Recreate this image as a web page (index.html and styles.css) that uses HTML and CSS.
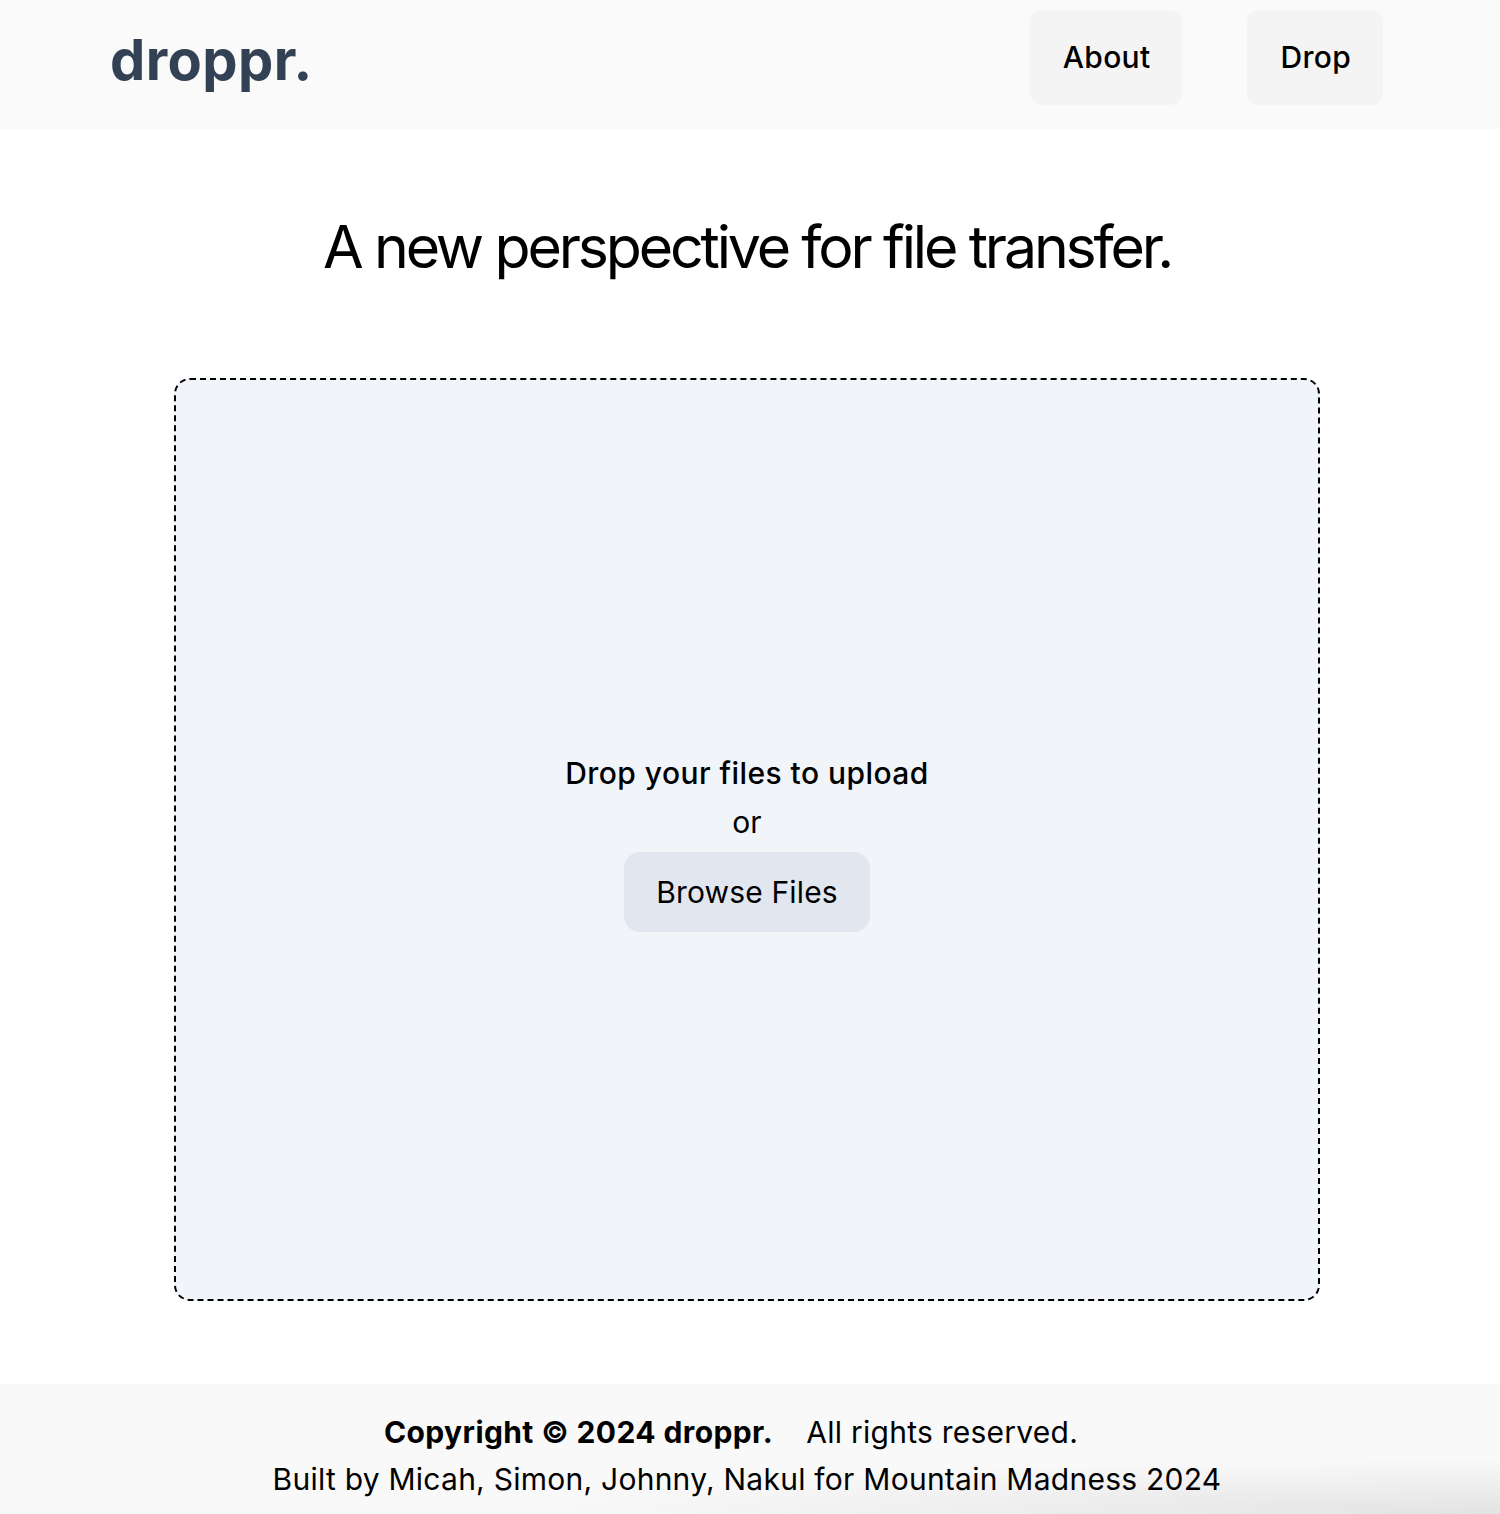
FILE: index.html
```html
<!DOCTYPE html>
<html lang="en">
<head>
<meta charset="utf-8">
<title>droppr.</title>
<link rel="stylesheet" href="styles.css">
</head>
<body>
<header class="site-header">
  <a class="logo" href="#">droppr.</a>
  <nav class="nav">
    <a class="nav-btn" href="#">About</a>
    <a class="nav-btn" href="#">Drop</a>
  </nav>
</header>
<main class="main">
  <h1 class="headline">A new perspective for file transfer.</h1>
  <section class="dropzone">
    <p class="drop-title">Drop your files to upload</p>
    <p class="drop-or">or</p>
    <button class="browse-btn" type="button">Browse Files</button>
  </section>
</main>
<footer class="site-footer">
  <p class="footer-line"><strong>Copyright © 2024 droppr.</strong><span class="rights">All rights reserved.</span></p>
  <p class="footer-line">Built by Micah, Simon, Johnny, Nakul for Mountain Madness 2024</p>
</footer>
</body>
</html>
```

FILE: styles.css
```css
* { box-sizing: border-box; }
html, body { margin: 0; padding: 0; }
body {
  font-family: Inter, "Noto Sans", "Liberation Sans", sans-serif;
  color: #000;
  background: #fff;
  width: 1500px;
}
a { text-decoration: none; color: inherit; }
p { margin: 0; }

.site-header {
  height: 129px;
  background: #fafafa;
  display: flex;
  align-items: flex-start;
  justify-content: space-between;
  padding: 10px 117px 0 110px;
}
.logo {
  font-size: 56px;
  font-weight: 700;
  color: #334155;
  letter-spacing: 0.4px;
  line-height: 1;
  margin-top: 22px;
}
.nav { display: flex; gap: 65px; }
.nav-btn {
  display: block;
  background: #f4f4f4;
  border-radius: 12px;
  padding: 32px 32px 32px 33px;
  font-size: 30px;
  line-height: 31px;
  font-weight: 500;
  letter-spacing: 0.3px;
  color: #000;
}

.main {
  display: flex;
  flex-direction: column;
  align-items: center;
  padding: 0 6px 83px 0;
}
.headline {
  margin: 82px 0 0;
  font-size: 59px;
  font-weight: 400;
  line-height: 72px;
  letter-spacing: -3.15px;
}
.dropzone {
  margin-top: 95px;
  width: 1146px;
  height: 923px;
  border: 2px dashed #000;
  border-radius: 16px;
  background: #f1f4f9;
  display: flex;
  flex-direction: column;
  align-items: center;
  justify-content: center;
  padding-top: 8px;
}
.drop-title {
  font-size: 30px;
  font-weight: 500;
  line-height: 36px;
  letter-spacing: 0.45px;
}
.drop-or {
  font-size: 30px;
  line-height: 36px;
  margin-top: 13px;
}
.browse-btn {
  margin-top: 12px;
  font-family: inherit;
  font-size: 30px;
  line-height: 36px;
  letter-spacing: 0.15px;
  color: #000;
  background: #e2e7ef;
  border: 0;
  border-radius: 16px;
  padding: 22px 32px 22px;
}

.site-footer {
  height: 130px;
  background:
    radial-gradient(ellipse 1000px 55px at 100% 100%, #e3e3e3 0%, rgba(249,249,249,0) 100%),
    #f9f9f9;
  text-align: center;
  padding: 25px 6px 0 0;
}
.footer-line {
  font-size: 30px;
  line-height: 47px;
  letter-spacing: 0.25px;
}
.footer-line strong { font-weight: 700; letter-spacing: 0.4px; }
.rights { margin: 0 32px 0 33px; }
```
